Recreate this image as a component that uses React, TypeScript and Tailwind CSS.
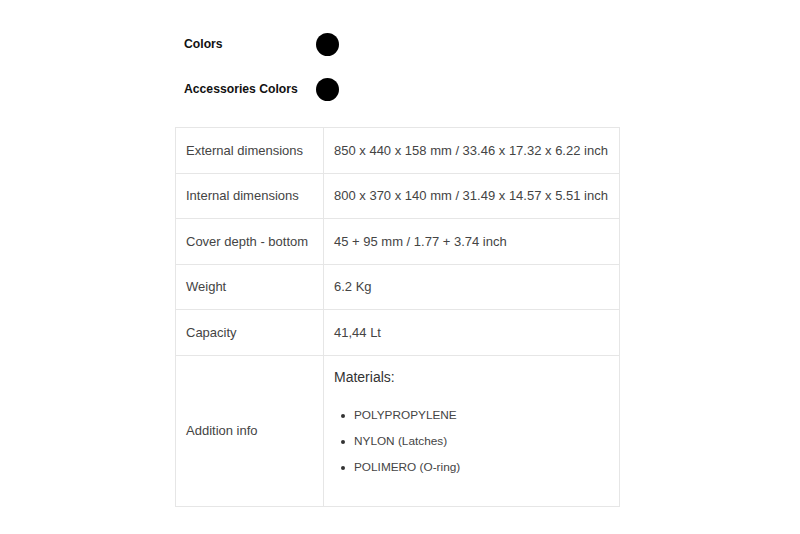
const specs: { label: string; value: string }[] = [
  { label: "External dimensions", value: "850 x 440 x 158 mm / 33.46 x 17.32 x 6.22 inch" },
  { label: "Internal dimensions", value: "800 x 370 x 140 mm / 31.49 x 14.57 x 5.51 inch" },
  { label: "Cover depth - bottom", value: "45 + 95 mm / 1.77 + 3.74 inch" },
  { label: "Weight", value: "6.2 Kg" },
  { label: "Capacity", value: "41,44 Lt" },
];

const materials = ["POLYPROPYLENE", "NYLON (Latches)", "POLIMERO (O-ring)"];

function Swatch({ label }: { label: string }) {
  return (
    <div className="flex items-center h-[23px]">
      <span className="w-[132px] text-[12.2px] font-bold text-[#111]">{label}</span>
      <span className="w-[23px] h-[23px] rounded-full bg-black" />
    </div>
  );
}

export default function App() {
  return (
    <div
      className="w-[800px] h-[534px] bg-white text-[#444] overflow-hidden"
      style={{ fontFamily: '"Liberation Sans", Arial, sans-serif' }}
    >
      <div className="ml-[175px] pt-[33px] w-[445px]">
        <div className="pl-[9px] flex flex-col gap-[22px]">
          <Swatch label="Colors" />
          <Swatch label="Accessories Colors" />
        </div>

        <table className="mt-[26px] w-[445px] border-collapse border border-[#e6e6e6] text-[13px]">
          <tbody>
            {specs.map((s) => (
              <tr key={s.label} className="h-[45.6px]">
                <td className="w-[148px] border border-[#e6e6e6] px-[10px] align-middle">{s.label}</td>
                <td className="border border-[#e6e6e6] px-[10px] align-middle">{s.value}</td>
              </tr>
            ))}
            <tr className="h-[151px]">
              <td className="border border-[#e6e6e6] px-[10px] align-middle">Addition info</td>
              <td className="border border-[#e6e6e6] px-[10px] align-top pt-[11px]">
                <p className="text-[14px] text-[#333]">Materials:</p>
                <ul className="mt-[20px] flex flex-col gap-[10px] text-[11.8px]">
                  {materials.map((m) => (
                    <li key={m} className="flex items-center h-[16px]">
                      <span className="w-[4px] h-[4px] rounded-full bg-[#333] ml-[7px] mr-[9px]" />
                      {m}
                    </li>
                  ))}
                </ul>
              </td>
            </tr>
          </tbody>
        </table>
      </div>
    </div>
  );
}
